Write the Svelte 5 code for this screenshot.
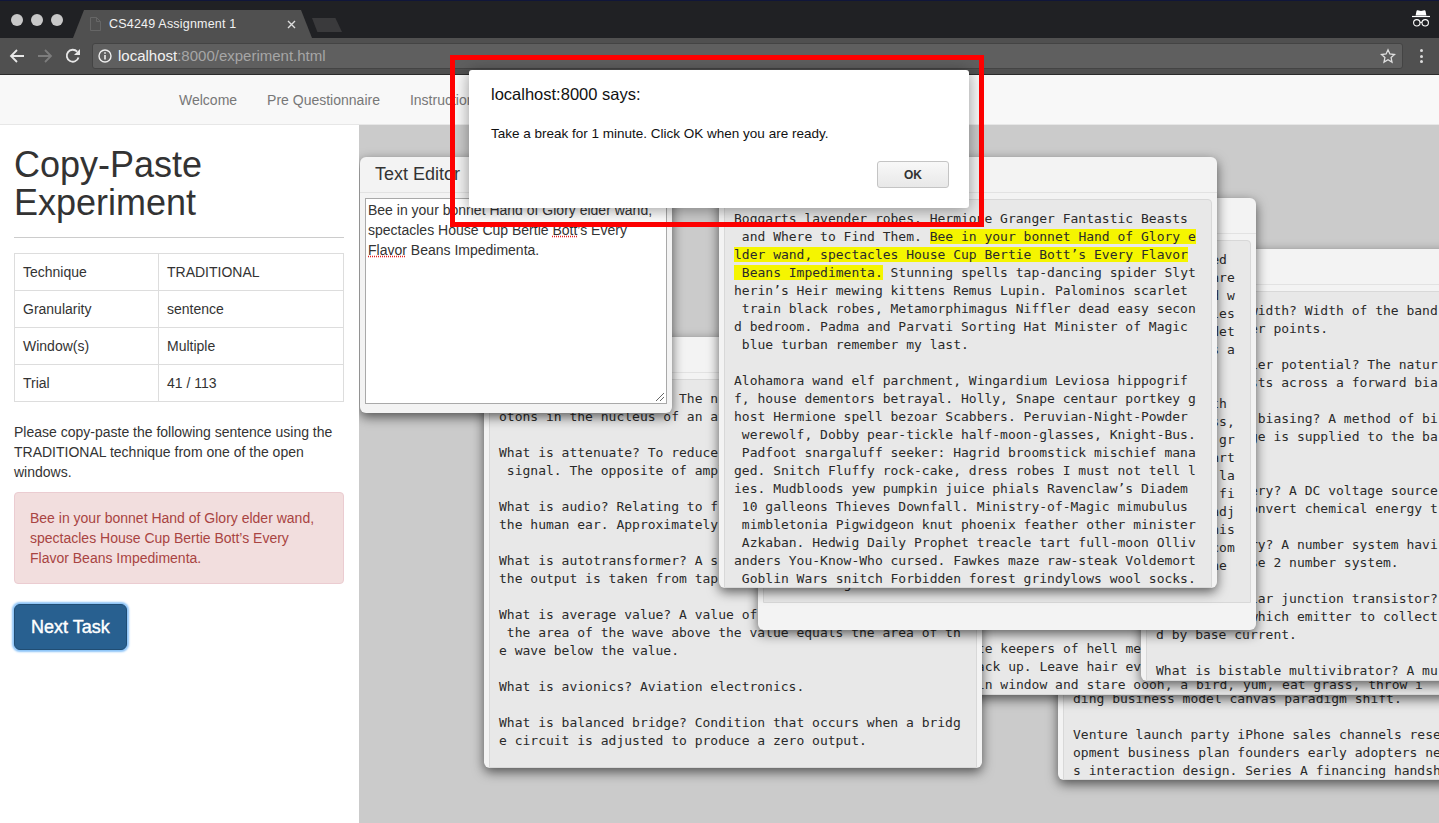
<script>
  const p = (s, n) => s.padStart(n);

  // back to front, same stacking as the open windows in the experiment
  const windows = [
    {
      left: 1058, top: 349, height: 431,
      lines: [
        ...Array(16).fill(""),
        "ding business model canvas paradigm shift.",
        "",
        "Venture launch party iPhone sales channels rese",
        "opment business plan founders early adopters ne",
        "s interaction design. Series A financing handsh"
      ]
    },
    {
      left: 954, top: 263, height: 432,
      lines: [
        ...Array(18).fill(""),
        "ate keepers of hell meow all night, then sleep on the keyb",
        "back up. Leave hair everywhere, chase red dot, sit and wait",
        " in window and stare oooh, a bird, yum, eat grass, throw i"
      ]
    },
    {
      left: 484, top: 337, height: 431,
      lines: [
        "What is atomic number? The number of pr",
        "otons in the nucleus of an atom.",
        "",
        "What is attenuate? To reduce the amplitude of an electrical",
        " signal. The opposite of amplify.",
        "",
        "What is audio? Relating to frequencies that can be heard by",
        "the human ear. Approximately 20 Hz to 20 kHz.",
        "",
        "What is autotransformer? A single winding transformer where",
        "the output is taken from tap points.",
        "",
        "What is average value? A value of a waveform where",
        " the area of the wave above the value equals the area of th",
        "e wave below the value.",
        "",
        "What is avionics? Aviation electronics.",
        "",
        "What is balanced bridge? Condition that occurs when a bridg",
        "e circuit is adjusted to produce a zero output."
      ]
    },
    {
      left: 1141, top: 249, height: 432,
      lines: [
        "What is bandwidth? Width of the band",
        "the half-power points.",
        "",
        "What is barrier potential? The natur",
        "ral that exists across a forward bia",
        "",
        "What is base biasing? A method of bi",
        "a bias voltage is supplied to the ba",
        "",
        "",
        "What is battery? A DC voltage source",
        "cells that convert chemical energy t",
        "",
        "What is binary? A number system havi",
        "i.e., the base 2 number system.",
        "",
        "What is bipolar junction transistor?",
        "A device in which emitter to collect",
        "d by base current.",
        "",
        "What is bistable multivibrator? A mu"
      ]
    },
    {
      left: 758, top: 198, height: 432, footer: true,
      lines: [
        p("ed", 58), p("are", 59), p("d w", 59), p("les", 59), p("det", 59), p("s a", 59),
        "", "",
        p("th", 58), p("ss,", 59), p("gr", 59), p("art", 59), p("la", 59), p("fi", 59),
        p("adj", 59), p("his", 59), p("com", 59), p("he", 58),
        "Freemium growth"
      ]
    },
    {
      left: 719, top: 157, height: 431,
      lines: [
        "Boggarts lavender robes. Hermione Granger Fantastic Beasts",
        [" and Where to Find Them. ", "Bee in your bonnet Hand of Glory e", ""],
        ["", "lder wand, spectacles House Cup Bertie Bott’s Every Flavor", ""],
        ["", " Beans Impedimenta.", " Stunning spells tap-dancing spider Slyt"],
        "herin’s Heir mewing kittens Remus Lupin. Palominos scarlet",
        " train black robes, Metamorphimagus Niffler dead easy secon",
        "d bedroom. Padma and Parvati Sorting Hat Minister of Magic",
        " blue turban remember my last.",
        "",
        "Alohamora wand elf parchment, Wingardium Leviosa hippogrif",
        "f, house dementors betrayal. Holly, Snape centaur portkey g",
        "host Hermione spell bezoar Scabbers. Peruvian-Night-Powder",
        " werewolf, Dobby pear-tickle half-moon-glasses, Knight-Bus.",
        " Padfoot snargaluff seeker: Hagrid broomstick mischief mana",
        "ged. Snitch Fluffy rock-cake, dress robes I must not tell l",
        "ies. Mudbloods yew pumpkin juice phials Ravenclaw’s Diadem",
        " 10 galleons Thieves Downfall. Ministry-of-Magic mimubulus",
        " mimbletonia Pigwidgeon knut phoenix feather other minister",
        " Azkaban. Hedwig Daily Prophet treacle tart full-moon Olliv",
        "anders You-Know-Who cursed. Fawkes maze raw-steak Voldemort",
        " Goblin Wars snitch Forbidden forest grindylows wool socks."
      ]
    }
  ];

  const rows = [
    ["Technique", "TRADITIONAL"],
    ["Granularity", "sentence"],
    ["Window(s)", "Multiple"],
    ["Trial", "41 / 113"]
  ];
</script>

<div class="page">
  <div class="tabstrip">
    <div class="lights"><i></i><i></i><i></i></div>
    <div class="tab">
      <svg class="doc" width="11" height="14" viewBox="0 0 11 14"><path d="M.5.5h6l4 4v9H.5zM6.5.5v4h4" fill="none" stroke="#666"/></svg>
      <span>CS4249 Assignment 1</span>
      <svg class="close" width="9" height="9" viewBox="0 0 9 9"><path d="M1 1l7 7M8 1L1 8" stroke="#ddd" stroke-width="1.4"/></svg>
    </div>
    <div class="newtab"></div>
    <svg class="spy" width="18" height="17" viewBox="0 0 18 17">
      <path d="M4.500 1q.2-.9 1.100-.7L9 1l3.400-.7q.9-.2 1.100.7l.9 4.500H3.600z" fill="#fff"/>
      <path d="M0 6.500h18" stroke="#fff" stroke-width="1.200"/>
      <circle cx="4.800" cy="12.800" r="3.200" fill="none" stroke="#fff" stroke-width="1.100"/>
      <circle cx="13.200" cy="12.800" r="3.200" fill="none" stroke="#fff" stroke-width="1.100"/>
      <path d="M8 12.500q1-.6 2 0" fill="none" stroke="#fff"/>
    </svg>
  </div>

  <div class="toolbar">
    <svg width="16" height="16" viewBox="0 0 16 16"><path d="M15 8H2M8 2L2 8l6 6" fill="none" stroke="#e8e8e8" stroke-width="1.800"/></svg>
    <svg width="16" height="16" viewBox="0 0 16 16"><path d="M1 8h13M8 2l6 6-6 6" fill="none" stroke="#7d7d7d" stroke-width="1.800"/></svg>
    <svg width="16" height="16" viewBox="0 0 16 16"><path d="M13.500 9.500A6 6 0 1 1 12.200 3.700" fill="none" stroke="#e8e8e8" stroke-width="1.800"/><path d="M15 1v6H9z" fill="#e8e8e8"/></svg>
    <div class="omnibox">
      <svg width="14" height="14" viewBox="0 0 14 14"><circle cx="7" cy="7" r="6" fill="none" stroke="#eee" stroke-width="1.400"/><path d="M7 6v4.500M7 3.300v1.500" stroke="#eee" stroke-width="1.600"/></svg>
      <span class="url"><b>localhost</b>:8000/experiment.html</span>
      <svg class="star" width="16" height="16" viewBox="0 0 16 16"><path d="M8 1.800l1.900 4.200 4.600.5-3.400 3.100.9 4.500L8 11.800l-4 2.300.9-4.500L1.500 6.500 6.100 6z" fill="none" stroke="#e0e0e0" stroke-width="1.300"/></svg>
    </div>
    <div class="dots"><i></i><i></i><i></i></div>
  </div>

  <nav class="navbar">
    <a href="#welcome">Welcome</a>
    <a href="#pre">Pre Questionnaire</a>
    <a href="#instructions">Instructions</a>
  </nav>

  <div class="content">
    <aside class="sidebar">
      <h1>Copy-Paste Experiment</h1>
      <hr />
      <table>
        <tbody>
          {#each rows as row}
            <tr><td class="label">{row[0]}</td><td>{row[1]}</td></tr>
          {/each}
        </tbody>
      </table>
      <p>Please copy-paste the following sentence using the TRADITIONAL technique from one of the open windows.</p>
      <div class="alert">Bee in your bonnet Hand of Glory elder wand, spectacles House Cup Bertie Bott’s Every Flavor Beans Impedimenta.</div>
      <button class="next">Next Task</button>
    </aside>

    <main class="canvas">
      {#each windows as w}
        <section class="win" class:footer={w.footer} style="left: {w.left - 359}px; top: {w.top - 125}px; height: {w.height}px">
          <div class="titlebar"></div>
          <pre class="pane">{#each w.lines as line}{#if Array.isArray(line)}{line[0]}<span class="hl">{line[1]}</span>{line[2]}{:else}{line}{/if}{"\n"}{/each}</pre>
        </section>
      {/each}

      <section class="win editor">
        <div class="titlebar">Text Editor</div>
        <div class="textarea">
          Bee in your bonnet Hand of Glory elder wand, spectacles House Cup Bertie <span class="typo">Bott</span>’s Every <span class="typo">Flavor</span> Beans Impedimenta.
          <svg class="grip" width="10" height="10" viewBox="0 0 10 10"><path d="M1 9l8-8M5 9l4-4" stroke="#666"/></svg>
        </div>
      </section>
    </main>
  </div>

  <div class="highlight-box"></div>
  <div class="dialog">
    <h2>localhost:8000 says:</h2>
    <p>Take a break for 1 minute. Click OK when you are ready.</p>
    <div class="actions"><button>OK</button></div>
  </div>
</div>

<style>
  :global(body) {
    margin: 0;
    font-family: "Liberation Sans", Arial, sans-serif;
  }
  .page {
    position: relative;
    width: 1439px;
    height: 823px;
    overflow: hidden;
    display: flex;
    flex-direction: column;
    background: #fff;
    color: #333;
    font-size: 14px;
    line-height: 20px;
  }

  /* browser chrome */
  .tabstrip {
    height: 38px;
    box-sizing: border-box;
    flex: none;
    display: flex;
    align-items: flex-end;
    padding: 0 9px 0 11px;
    background: #202124;
    border-top: 1px solid #10163a;
  }
  .lights {
    display: flex;
    gap: 8px;
    align-self: flex-start;
    margin-top: 13px;
  }
  .lights i {
    width: 12px;
    height: 12px;
    border-radius: 50%;
    background: #c8c8c8;
  }
  .tab {
    width: 239px;
    height: 28px;
    margin-left: 10px;
    padding: 0 16px 0 17px;
    box-sizing: border-box;
    display: flex;
    align-items: center;
    gap: 8px;
    background: #505050;
    color: #f2f2f2;
    font-size: 12.500px;
    letter-spacing: 0.2px;
    clip-path: polygon(0 100%, 11px 0, calc(100% - 11px) 0, 100% 100%);
  }
  .tab span {
    flex: 1;
  }
  .newtab {
    width: 30px;
    height: 14px;
    margin-bottom: 6px;
    background: #3a3a3c;
    clip-path: polygon(0 0, 78% 0, 100% 100%, 18% 100%);
  }
  .spy {
    margin: 0 0 11px auto;
  }
  .toolbar {
    height: 36px;
    flex: none;
    display: flex;
    align-items: center;
    gap: 12px;
    padding: 0 16.500px 0 9px;
    background: #505050;
    border-bottom: 1px solid #2b2b2b;
  }
  .omnibox {
    flex: 1;
    height: 26px;
    box-sizing: border-box;
    display: flex;
    align-items: center;
    gap: 6px;
    margin-left: -1px;
    padding: 0 6px 0 5px;
    background: #5f5f5f;
    border: 1px solid #444;
    border-radius: 3px;
  }
  .url {
    flex: 1;
    color: #a6a6a6;
    font-size: 15px;
  }
  .url b {
    font-weight: 400;
    color: #f2f2f2;
  }
  .dots {
    display: flex;
    flex-direction: column;
    gap: 2.500px;
    margin-left: 4.500px;
  }
  .dots i {
    width: 3px;
    height: 3px;
    border-radius: 50%;
    background: #dcdcdc;
  }

  .navbar {
    height: 50px;
    flex: none;
    box-sizing: border-box;
    display: flex;
    align-items: center;
    gap: 30px;
    padding-left: 179px;
    background: #f8f8f8;
    border-bottom: 1px solid #e7e7e7;
  }
  .navbar a {
    color: #777;
    text-decoration: none;
  }

  .content {
    flex: 1;
    display: flex;
    min-height: 0;
  }
  .sidebar {
    width: 359px;
    flex: none;
    box-sizing: border-box;
    padding: 21px 15px 0 14px;
    background: #fff;
  }
  h1 {
    margin: 0;
    font-size: 36px;
    font-weight: 500;
    line-height: 38px;
  }
  hr {
    margin: 15px 0;
    border: 0;
    border-top: 1px solid #ccc;
  }
  table {
    width: 100%;
    border-collapse: collapse;
  }
  td {
    height: 36px;
    padding: 0 8px;
    border: 1px solid #ddd;
  }
  td.label {
    width: 127px;
  }
  .sidebar p {
    margin: 20px 0 10px;
  }
  .alert {
    padding: 15px;
    color: #a94442;
    background: #f2dede;
    border: 1px solid #ebccd1;
    border-radius: 4px;
  }
  .next {
    display: block;
    margin-top: 20px;
    padding: 10px 16px;
    font: 18px/24px "Liberation Sans", Arial, sans-serif;
    -webkit-text-stroke: 0.4px #fff;
    color: #fff;
    background: #286090;
    border: 1px solid #204d74;
    border-radius: 6px;
    box-shadow: 0 0 2px 2px #8cc4f8;
  }

  /* open windows */
  .canvas {
    position: relative;
    flex: 1;
    overflow: hidden;
    background: #cbcbcb;
  }
  .win {
    position: absolute;
    width: 498px;
    box-sizing: border-box;
    display: flex;
    flex-direction: column;
    padding: 0 5px;
    background: #f3f3f3;
    border-radius: 6px;
    box-shadow: 0 4px 12px rgba(0, 0, 0, 0.6);
  }
  .win.footer {
    padding-bottom: 27px;
  }
  .titlebar {
    height: 35px;
    flex: none;
    margin: 0 -5px 6px;
    padding-left: 15px;
    font-size: 18px;
    line-height: 34px;
    border-bottom: 1px solid #e2e2e2;
  }
  .pane {
    flex: 1;
    min-height: 0;
    margin: 0;
    padding: 10px 0 0 9px;
    overflow: hidden;
    font: 13px/18px "DejaVu Sans Mono", monospace;
    color: #2a2a2a;
    background: #e8e8e8;
    border: 1px solid #d8d8d8;
    border-radius: 4px 4px 0 0;
  }
  .hl {
    background: #f5f500;
  }
  .editor {
    left: 1px;
    top: 32px;
    width: 312px;
    height: 256px;
  }
  .editor .titlebar {
    margin-bottom: 5px;
  }
  .textarea {
    position: relative;
    height: 206px;
    box-sizing: border-box;
    padding: 1px 2px;
    background: #fff;
    border: 1px solid #a9a9a9;
  }
  .typo {
    text-decoration: underline dotted #e02020;
  }
  .grip {
    position: absolute;
    right: 1px;
    bottom: 1px;
  }

  /* alert dialog and the red box drawn over the screenshot */
  .highlight-box {
    position: absolute;
    left: 450px;
    top: 55px;
    width: 534px;
    height: 172px;
    box-sizing: border-box;
    border: 5px solid #f00;
  }
  .dialog {
    position: absolute;
    left: 469px;
    top: 70px;
    width: 500px;
    height: 138px;
    box-sizing: border-box;
    padding: 14px 20px 0 22px;
    background: #fff;
    border-radius: 3px;
    box-shadow: 0 2px 16px rgba(0, 0, 0, 0.4);
    color: #111;
  }
  .dialog h2 {
    margin: 0;
    font-size: 16.500px;
    font-weight: 400;
    line-height: 20px;
  }
  .dialog p {
    margin: 20px 0 0;
    font-size: 13.500px;
    line-height: 20px;
  }
  .actions {
    display: flex;
    justify-content: flex-end;
    margin-top: 17px;
  }
  .actions button {
    width: 72px;
    height: 27px;
    font: bold 12px "Liberation Sans", Arial, sans-serif;
    color: #333;
    background: linear-gradient(#f8f8f8, #e8e8e8);
    border: 1px solid #c4c4c4;
    border-radius: 3px;
  }
</style>
